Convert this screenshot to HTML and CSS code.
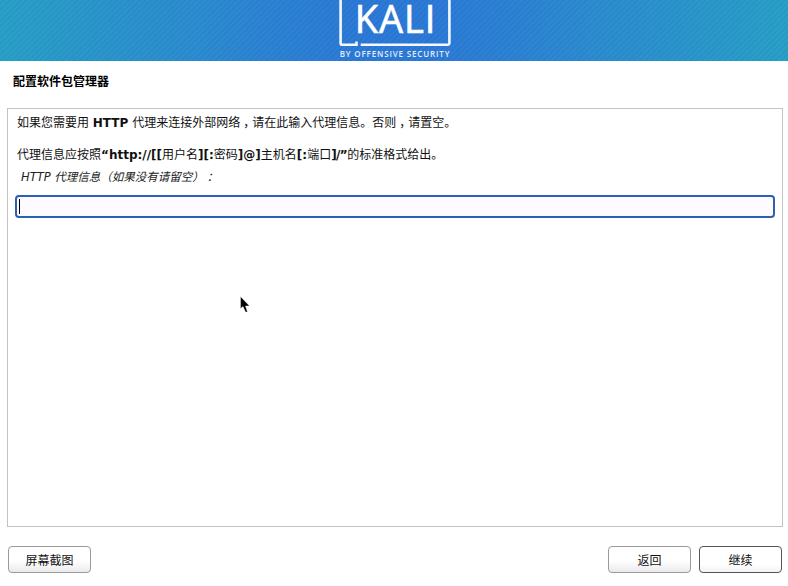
FILE: index.html
```html
<!DOCTYPE html>
<html lang="zh-CN">
<head>
<meta charset="utf-8">
<title>配置软件包管理器</title>
<link rel="stylesheet" href="styles.css">
</head>
<body>
<div class="page">
  <header class="banner">
    <svg class="logo" width="116" height="61" viewBox="0 0 116 61">
      <path class="logo-frame" d="M4.600 -4V43.200a1.500 1.500 0 0 0 1.500 1.500H20.500V41.500M24.700 44.700H111.900a1.500 1.500 0 0 0 1.500-1.500V-4"/>
      <text class="logo-word" x="59.500" y="33" text-anchor="middle">KALI</text>
      <text class="logo-sub" x="59" y="57" text-anchor="middle">BY OFFENSIVE SECURITY</text>
    </svg>
  </header>
  <h1 class="title">配置软件包管理器</h1>
  <main class="panel">
    <p class="line first">如果您需要用 <b>HTTP</b> 代理来连接外部网络<span class="mid">，</span>请在此输入代理信息。否则<span class="mid">，</span>请置空。</p>
    <p class="line second">代理信息应按照<b>“http://[[</b>用户名<b>][:</b>密码<b>]@]</b>主机名<b>[:</b>端口<b class="tight">]/”</b>的标准格式给出。</p>
    <p class="prompt">HTTP 代理信息（如果没有请留空）<span class="mid">：</span></p>
    <div class="field"><span class="caret"></span></div>
  </main>
  <footer class="actions">
    <button class="btn">屏幕截图</button>
    <div class="nav">
      <button class="btn">返回</button>
      <button class="btn btn-default">继续</button>
    </div>
  </footer>
  <svg class="pointer" width="11" height="18" viewBox="0 0 11 18">
    <path d="M0.500 0.500V12.500L3 10.500L5.500 16H7.500L5.500 10H9.500Z" fill="#000" stroke="#fff" stroke-width="0.400"/>
  </svg>
</div>
</body>
</html>
```
FILE: styles.css
```css
* { box-sizing: border-box; }
html, body { margin: 0; padding: 0; background: #fff; }
.page {
  position: relative;
  width: 788px;
  height: 586px;
  overflow: hidden;
  display: flex;
  flex-direction: column;
  font-family: "DejaVu Sans", "Noto Sans CJK SC", sans-serif;
  font-size: 12px;
  color: #000;
}
.banner {
  height: 61px;
  flex: none;
  display: flex;
  justify-content: center;
  background:
    repeating-linear-gradient(135deg, rgba(255,255,255,0.018) 0 2px, rgba(0,0,0,0.018) 2px 4px),
    linear-gradient(90deg, #279ec6 0%, #2a8acf 25%, #2a78d6 45%, #2a78d6 55%, #2a8acf 75%, #279ec6 100%);
}
.logo { display: block; }
.logo-frame { fill: none; stroke: #f4f8fd; stroke-width: 2.600; }
.logo-word { font-family: "Open Sans", sans-serif; font-size: 38px; fill: #fff; stroke: #fff; stroke-width: 0.700px; letter-spacing: 1px; }
.logo-sub { font-family: "Open Sans", sans-serif; font-weight: 600; font-size: 8px; fill: #e4ecf9; letter-spacing: 0.850px; }
.title {
  margin: 0;
  padding: 13px 0 0 13px;
  height: 47px;
  flex: none;
  font-size: 12px;
  line-height: 17px;
  font-weight: bold;
}
.panel {
  margin: 0 5px 0 7px;
  height: 419px;
  flex: none;
  border: 1px solid #c3c3c3;
  padding: 6px 7px 0;
  background: #fff;
}
.line { margin: 0; line-height: 17px; padding-left: 2px; color: #111; }
.second { margin-top: 15px; }
.mid { padding-left: 3px; letter-spacing: -3px; }
.tight { letter-spacing: -0.600px; }
.prompt {
  margin: 5px 0 0;
  padding-left: 6px;
  font-size: 11.500px;
  line-height: 17px;
  font-style: italic;
  color: #222;
}
.field {
  margin-top: 9px;
  height: 23px;
  border: 2px solid #2c60b5;
  border-radius: 4px;
  background: #fdfbff;
  padding: 2px 0 0 2px;
}
.caret { display: block; width: 1px; height: 15px; background: #000; }
.actions {
  flex: none;
  display: flex;
  justify-content: space-between;
  margin: 19px 6px 0 8px;
}
.nav { display: flex; gap: 8px; }
.btn {
  width: 83px;
  height: 27px;
  border: 1px solid #9a9a9a;
  border-radius: 4px;
  background: linear-gradient(180deg, #ffffff 0%, #ffffff 55%, #ebe9ec 100%);
  font-family: inherit;
  font-size: 12px;
  color: #111;
  padding: 0;
}
.btn-default { border-color: #555; background: linear-gradient(180deg, #fff 0%, #fff 70%, #f3f2f4 100%); }
.pointer { position: absolute; left: 240px; top: 296px; }
```
